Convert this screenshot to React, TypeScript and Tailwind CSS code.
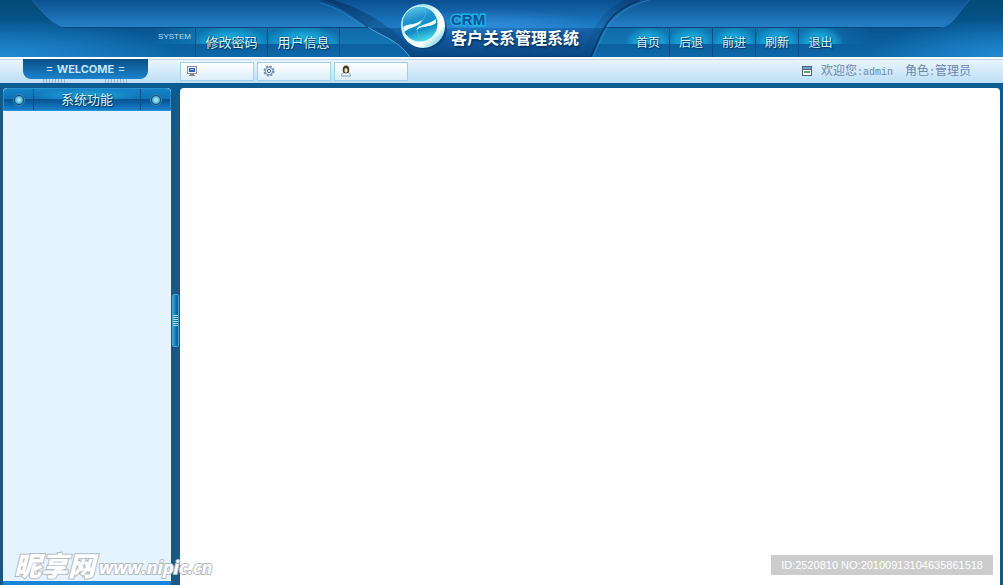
import React, { useState } from "react";

const leftLinks = ["修改密码", "用户信息"];
const rightLinks = ["首页", "后退", "前进", "刷新", "退出"];

function BannerArt() {
  return (
    <div aria-hidden="true" className="absolute inset-0 flex">
      <svg className="h-full w-80 shrink-0" viewBox="0 0 320 57" preserveAspectRatio="none">
        <defs>
          <linearGradient id="baseL" x1="0" y1="0" x2="0" y2="1">
            <stop offset="0" stopColor="#034a75" />
            <stop offset="0.5" stopColor="#075590" />
            <stop offset="1" stopColor="#0e68aa" />
          </linearGradient>
          <radialGradient id="cornerL" cx="0.04" cy="1" r="1">
            <stop offset="0" stopColor="#2189d2" />
            <stop offset="1" stopColor="#2189d2" stopOpacity="0" />
          </radialGradient>
          <linearGradient id="wingL" x1="0" y1="0" x2="0" y2="1">
            <stop offset="0" stopColor="#0c5190" />
            <stop offset="1" stopColor="#2480c6" />
          </linearGradient>
          <linearGradient id="glowL" x1="0" y1="0" x2="1" y2="0">
            <stop offset="0" stopColor="#1590cc" stopOpacity="0" />
            <stop offset="0.3" stopColor="#1590cc" stopOpacity="0.7" />
            <stop offset="1" stopColor="#1590cc" stopOpacity="0.7" />
          </linearGradient>
        </defs>
        <rect width="320" height="57" fill="url(#baseL)" />
        <rect y="18" width="170" height="39" fill="url(#cornerL)" />
        <path d="M32 0C40 9 49 22 63 27H320V0Z" fill="url(#wingL)" />
        <path d="M32 0C40 9 49 22 63 27" fill="none" stroke="#2c7db8" strokeOpacity="0.6" />
        <rect x="63" y="27" width="257" height="1" fill="#0a4577" />
        <rect x="150" y="28" width="170" height="16" fill="url(#glowL)" opacity="0.7" />
      </svg>
      <svg className="h-full w-[340px] shrink-0" viewBox="0 0 340 57">
        <defs>
          <linearGradient id="wingC" x1="0" y1="0" x2="0" y2="1">
            <stop offset="0" stopColor="#0c5190" />
            <stop offset="1" stopColor="#2480c6" />
          </linearGradient>
          <linearGradient id="bandC" x1="0" y1="0" x2="0" y2="1">
            <stop offset="0" stopColor="#0f6aa8" />
            <stop offset="0.54" stopColor="#1476b4" />
            <stop offset="0.56" stopColor="#0b609f" />
            <stop offset="1" stopColor="#0f69ad" />
          </linearGradient>
          <linearGradient id="panelTop" x1="0" y1="0" x2="0" y2="1">
            <stop offset="0" stopColor="#0a4f90" />
            <stop offset="1" stopColor="#207fca" />
          </linearGradient>
          <linearGradient id="panelLow" x1="0" y1="0" x2="0" y2="1">
            <stop offset="0" stopColor="#1663ab" />
            <stop offset="1" stopColor="#094682" />
          </linearGradient>
          <radialGradient id="panelGlow">
            <stop offset="0" stopColor="#3c9be8" stopOpacity="0.5" />
            <stop offset="1" stopColor="#3c9be8" stopOpacity="0" />
          </radialGradient>
          <linearGradient id="swoosh" x1="0" y1="0" x2="1" y2="1">
            <stop offset="0" stopColor="#052f5c" />
            <stop offset="1" stopColor="#063a6c" stopOpacity="0.1" />
          </linearGradient>
          <linearGradient id="swooshR" x1="1" y1="0" x2="0" y2="1">
            <stop offset="0" stopColor="#052f5c" />
            <stop offset="1" stopColor="#063a6c" stopOpacity="0.1" />
          </linearGradient>
          <clipPath id="panelClip">
            <path d="M0 0C20 4 34 17 50 28C60 35 76 38 90 57H271C276 46 280 33 288 22S307 5 320 0Z" />
          </clipPath>
        </defs>
        <rect width="340" height="27" fill="url(#wingC)" />
        <rect y="27" width="340" height="1" fill="#0a4577" />
        <rect y="28" width="340" height="29" fill="url(#bandC)" />
        <g clipPath="url(#panelClip)">
          <rect width="340" height="28" fill="url(#panelTop)" />
          <rect y="28" width="340" height="29" fill="url(#panelLow)" />
          <ellipse cx="175" cy="24" rx="100" ry="15" fill="url(#panelGlow)" />
          <path d="M0 0C20 4 34 17 50 28C60 35 76 38 90 57H98C82 36 58 14 14 0Z" fill="url(#swoosh)" opacity="0.7" />
          <path d="M320 0C307 5 296 11 288 22S276 46 271 57H262C268 38 278 12 304 0Z" fill="url(#swooshR)" opacity="0.4" />
        </g>
        <path d="M0 1C20 5 34 17 50 28" fill="none" stroke="#0a3f73" strokeWidth="2" strokeOpacity="0.6" />
        <path d="M48 27C60 36 76 38 90 57" fill="none" stroke="#6cb4ea" strokeOpacity="0.8" />
        <path d="M0 3C18 7 30 17 44 27" fill="none" stroke="#3c8fd0" strokeOpacity="0.5" />
        <path d="M271 57C276 46 280 33 288 22S307 5 320 0" fill="none" stroke="#052f5c" strokeWidth="1.5" strokeOpacity="0.8" />
        <path d="M273 57C278 46 282 35 290 24S309 6 329 0" fill="none" stroke="#58a5e2" strokeOpacity="0.4" />
        <rect x="90" y="56" width="181" height="1" fill="#063a6c" />
      </svg>
      <svg className="h-full min-w-0 flex-1" viewBox="0 0 343 57" preserveAspectRatio="none">
        <defs>
          <linearGradient id="baseR" x1="0" y1="0" x2="0" y2="1">
            <stop offset="0" stopColor="#034a75" />
            <stop offset="0.5" stopColor="#075590" />
            <stop offset="1" stopColor="#0e68aa" />
          </linearGradient>
          <radialGradient id="cornerR" cx="1" cy="1" r="1">
            <stop offset="0" stopColor="#2189d2" />
            <stop offset="1" stopColor="#2189d2" stopOpacity="0" />
          </radialGradient>
          <linearGradient id="wingR" x1="0" y1="0" x2="0" y2="1">
            <stop offset="0" stopColor="#0c5190" />
            <stop offset="1" stopColor="#2480c6" />
          </linearGradient>
          <linearGradient id="glowR" x1="0" y1="0" x2="1" y2="0">
            <stop offset="0" stopColor="#1590cc" stopOpacity="0.8" />
            <stop offset="0.7" stopColor="#1590cc" stopOpacity="0.7" />
            <stop offset="1" stopColor="#1590cc" stopOpacity="0" />
          </linearGradient>
        </defs>
        <rect width="343" height="57" fill="url(#baseR)" />
        <rect x="210" y="18" width="133" height="39" fill="url(#cornerR)" />
        <path d="M310 0C299 10 293 27 281 27H0V0Z" fill="url(#wingR)" />
        <path d="M310 0C299 10 293 27 281 27" fill="none" stroke="#2c7db8" strokeOpacity="0.6" />
        <rect y="27" width="281" height="1" fill="#0a4577" />
        <rect y="28" width="210" height="16" fill="url(#glowR)" opacity="0.7" />
      </svg>
    </div>
  );
}

function Logo() {
  return (
    <svg className="h-12 w-12 shrink-0" viewBox="0 0 48 48" aria-hidden="true">
      <defs>
        <linearGradient id="rim" x1="0.1" y1="0.1" x2="0.8" y2="0.9">
          <stop offset="0" stopColor="#6fcbea" />
          <stop offset="0.5" stopColor="#e9fcff" />
          <stop offset="0.8" stopColor="#ffffff" />
          <stop offset="1" stopColor="#8bdcec" />
        </linearGradient>
        <linearGradient id="ball" x1="0.3" y1="0" x2="0.6" y2="1">
          <stop offset="0" stopColor="#62cbea" />
          <stop offset="0.35" stopColor="#1f93cc" />
          <stop offset="0.65" stopColor="#0f8ac2" />
          <stop offset="1" stopColor="#50e2ee" />
        </linearGradient>
      </defs>
      <ellipse cx="25" cy="27" rx="22" ry="20" fill="#053463" opacity="0.5" />
      <circle cx="23" cy="24" r="22" fill="url(#rim)" />
      <circle cx="20" cy="22" r="18" fill="url(#ball)" stroke="#e6fbff" strokeWidth="1" />
      <path d="M23 6C28 10 25 16 20 22S17 33 22 38" fill="none" stroke="#5cc8e8" strokeWidth="1" opacity="0.6" />
      <path d="M3 25C9 21 14 24 22 18C20 25 12 24 4 30Z" fill="#eafcff" />
      <path d="M16 28C19 22 28 23 36 17V21C30 26 23 23 16 28Z" fill="#eafcff" />
    </svg>
  );
}

function MonitorIcon() {
  return (
    <svg className="h-3 w-3" viewBox="0 0 12 12" aria-hidden="true">
      <rect x="1.5" y="1.5" width="9" height="7" fill="#eef1f6" stroke="#8a8f9f" />
      <rect x="3" y="3" width="6" height="4" fill="#2f62b4" />
      <rect x="4" y="4" width="4" height="1" fill="#9cc2ee" />
      <path d="M4 9h4v1h1v1H3v-1h1z" fill="#8b7f74" />
      <path d="M9 8h1v1H9z" fill="#e08a3a" />
    </svg>
  );
}

function GearIcon() {
  return (
    <svg className="h-3 w-3" viewBox="0 0 12 12" aria-hidden="true">
      <circle cx="6" cy="6" r="4.8" fill="none" stroke="#6f87a3" strokeWidth="1.4" strokeDasharray="2.2 1.57" />
      <circle cx="6" cy="6" r="3.8" fill="#d8e7f3" stroke="#6f87a3" strokeWidth="0.9" />
      <circle cx="6" cy="6" r="1.6" fill="#ffffff" stroke="#4d6889" strokeWidth="1" />
    </svg>
  );
}

function PersonIcon() {
  return (
    <svg className="h-3 w-3" viewBox="0 0 12 12" aria-hidden="true">
      <path d="M1.5 11C1.5 8 3 7.5 6 7.5S10.5 8 10.5 11Z" fill="#e9f3fb" stroke="#7fa6c8" />
      <path d="M3 7C2 3 3.5 0.5 6 0.5S10 3 9 7L8 8H4Z" fill="#4a3a22" />
      <path d="M4.5 4C5 3 7 3 7.5 4V6.5C7 8 5 8 4.5 6.5Z" fill="#fbe3c4" />
      <path d="M5 8h2l-1 2z" fill="#e0a23c" />
    </svg>
  );
}

function CardIcon() {
  return (
    <svg className="h-3 w-3" viewBox="0 0 12 12" aria-hidden="true">
      <rect x="1.5" y="1.5" width="9" height="9" fill="#ffffff" stroke="#50637e" />
      <rect x="2" y="2" width="8" height="2" fill="#6f9fd0" />
      <rect x="1" y="4" width="10" height="1" fill="#50637e" />
      <rect x="3" y="6" width="6" height="2" fill="#5aa45c" />
    </svg>
  );
}

const tools = [
  { name: "显示", icon: <MonitorIcon /> },
  { name: "设置", icon: <GearIcon /> },
  { name: "用户", icon: <PersonIcon /> },
];

function Ticks() {
  return (
    <span className="h-1 w-[23px] bg-[repeating-linear-gradient(90deg,#94b3c9_0px,#94b3c9_1px,transparent_1px,transparent_3px)]" />
  );
}

function Knob() {
  return (
    <span className="flex h-3 w-3 items-center justify-center rounded-full border border-[#3a86b4] bg-[#0a4c82]">
      <span className="h-2 w-2 rounded-full bg-[radial-gradient(circle,#9be6f2_20%,#1c78a8)]" />
    </span>
  );
}

function Header() {
  return (
    <header className="relative h-[57px] shrink-0 bg-[#0e68aa]">
      <BannerArt />
      <div className="relative flex h-full">
        <div className="flex w-[340px] shrink-0 items-end justify-end">
          <span className="mb-3 mr-1 text-[8px] leading-4 text-[#b4ddf4]">SYSTEM</span>
          <nav className="flex h-[29px] border-l border-[#0a4f86] text-[13px] text-[#d5f6ff]">
            {leftLinks.map((label) => (
              <a
                key={label}
                href="#"
                className="flex w-[72px] items-center justify-center border-r border-[#0a4f86] bg-[radial-gradient(ellipse_at_50%_100%,#1ab6e6_25%,#1ab6e600_80%)] bg-[length:100%_16px] bg-no-repeat [text-shadow:0_0_2px_#053a66,1px_1px_1px_#053a66]">
                {label}
              </a>
            ))}
          </nav>
        </div>
        <div className="flex w-[287px] shrink-0 pl-[60px] pt-[2px]">
          <Logo />
          <div className="flex flex-col pl-[3px] pt-[9px]">
            <span className="text-[15px] font-bold leading-[18px] text-[#0b5296] [-webkit-text-stroke:3px_#1fb0e6] [paint-order:stroke_fill]">
              CRM
            </span>
            <h1 className="whitespace-nowrap text-base font-bold leading-5 text-white [text-shadow:1px_2px_2px_#05305a]">
              客户关系管理系统
            </h1>
          </div>
        </div>
        <nav className="mt-auto flex h-[29px] text-[12px] text-[#d5f6ff]">
          {rightLinks.map((label) => (
            <a
              key={label}
              href="#"
              className="flex w-[43px] items-center justify-center border-r border-[#0a4f86] bg-[radial-gradient(ellipse_at_50%_100%,#1ab6e6_25%,#1ab6e600_80%)] bg-[length:100%_16px] bg-no-repeat [text-shadow:0_0_2px_#053a66,1px_1px_1px_#053a66] last:border-r-0">
              {label}
            </a>
          ))}
        </nav>
      </div>
    </header>
  );
}

function Toolbar() {
  return (
    <div className="flex h-[26px] shrink-0 border-t-2 border-white bg-gradient-to-b from-[#eaf6fe] to-[#bcdef4] shadow-[inset_0_1px_0_#c6d3e6]">
      <div className="flex w-[180px] shrink-0 flex-col pl-[23px]">
        <div className="flex h-5 w-[125px] items-center justify-center gap-1 rounded-b-lg bg-gradient-to-b from-[#094f88] to-[#1b84cc] text-[11px] font-bold text-[#c5e6f8]">
          <span className="font-normal">=</span>
          <span className="font-[Inter]">WELCOME</span>
          <span className="font-normal">=</span>
        </div>
        <div className="flex w-[125px] justify-around">
          <Ticks />
          <Ticks />
        </div>
      </div>
      <div className="flex items-center gap-[3px]">
        {tools.map((tool) => (
          <button
            key={tool.name}
            type="button"
            aria-label={tool.name}
            className="flex h-[19px] w-[74px] cursor-pointer items-center border border-[#a3cfe2] bg-gradient-to-b from-white to-[#dceefa] pl-[5px]">
            {tool.icon}
          </button>
        ))}
      </div>
      <div className="ml-auto flex items-center whitespace-nowrap pr-8 text-[12px] text-[#6c86ad]">
        <CardIcon />
        <span className="pl-2">
          欢迎您<span className="font-[Liberation_Mono] text-[10px]">:admin</span>
        </span>
        <span className="pl-3">
          角色<span className="font-[Liberation_Mono] text-[10px]">:</span>管理员
        </span>
      </div>
    </div>
  );
}

export default function App() {
  const [open, setOpen] = useState(true);

  return (
    <div className="relative flex min-h-screen flex-col bg-[#1a587f] font-['Liberation_Sans','Noto_Sans_CJK_SC',sans-serif]">
      <Header />
      <Toolbar />
      <div className="flex flex-1 bg-gradient-to-b from-[#0a5b93] to-[#1a587f] to-[60px] pl-[3px] pr-[3px] pt-[5px]">
        {open && (
          <aside className="flex w-[168px] shrink-0 flex-col rounded-t border-b-4 border-[#1786d6] bg-[#e4f3fd]">
            <div className="flex h-[23px] items-stretch rounded-t border border-[#2b93d2] bg-[linear-gradient(#1585c8_0%,#0f72b4_48%,#075290_50%,#1780cc_100%)]">
              <div className="flex w-[30px] items-center justify-center border-r border-[#0a4f86]">
                <Knob />
              </div>
              <h2 className="flex flex-1 items-center justify-center bg-[radial-gradient(ellipse_at_50%_60%,#25a9df_0%,transparent_70%)] bg-[length:100%_11px] bg-no-repeat text-[13px] leading-5 text-[#d5f6ff] [text-shadow:0_0_2px_#053a66,1px_1px_1px_#053a66]">
                系统功能
              </h2>
              <div className="flex w-[30px] items-center justify-center border-l border-[#0a4f86]">
                <Knob />
              </div>
            </div>
          </aside>
        )}
        <div className="flex w-[9px] shrink-0 items-center justify-center pb-[33px]">
          <button
            type="button"
            aria-label="收起菜单"
            onClick={() => setOpen(!open)}
            className="flex h-[53px] w-[7px] cursor-pointer items-center justify-center rounded-xs border border-[#4aa3d4] bg-gradient-to-r from-[#2ba0d8] to-[#0a5590]">
            <span className="h-[11px] w-[5px] bg-[repeating-linear-gradient(#a6dcf2_0px,#a6dcf2_1px,transparent_1px,transparent_2px)]" />
          </button>
        </div>
        <main className="min-w-0 flex-1 rounded-t bg-white" />
      </div>
      <div className="pointer-events-none absolute bottom-1 left-[14px] flex items-center gap-1 italic text-white">
        <span className="text-[27px] font-black leading-7 [-webkit-text-stroke:2px_#b4bcc2] [paint-order:stroke_fill]">昵享网</span>
        <span className="font-[Open_Sans] text-[18px] font-bold leading-7 [-webkit-text-stroke:2px_#b4bcc2] [paint-order:stroke_fill]">www.nipic.cn</span>
      </div>
      <div className="pointer-events-none absolute bottom-[10px] right-[10px] bg-[#cccccc] px-[10px] text-[11px] leading-5 text-white">
        ID:2520810 NO:20100913104635861518
      </div>
    </div>
  );
}
